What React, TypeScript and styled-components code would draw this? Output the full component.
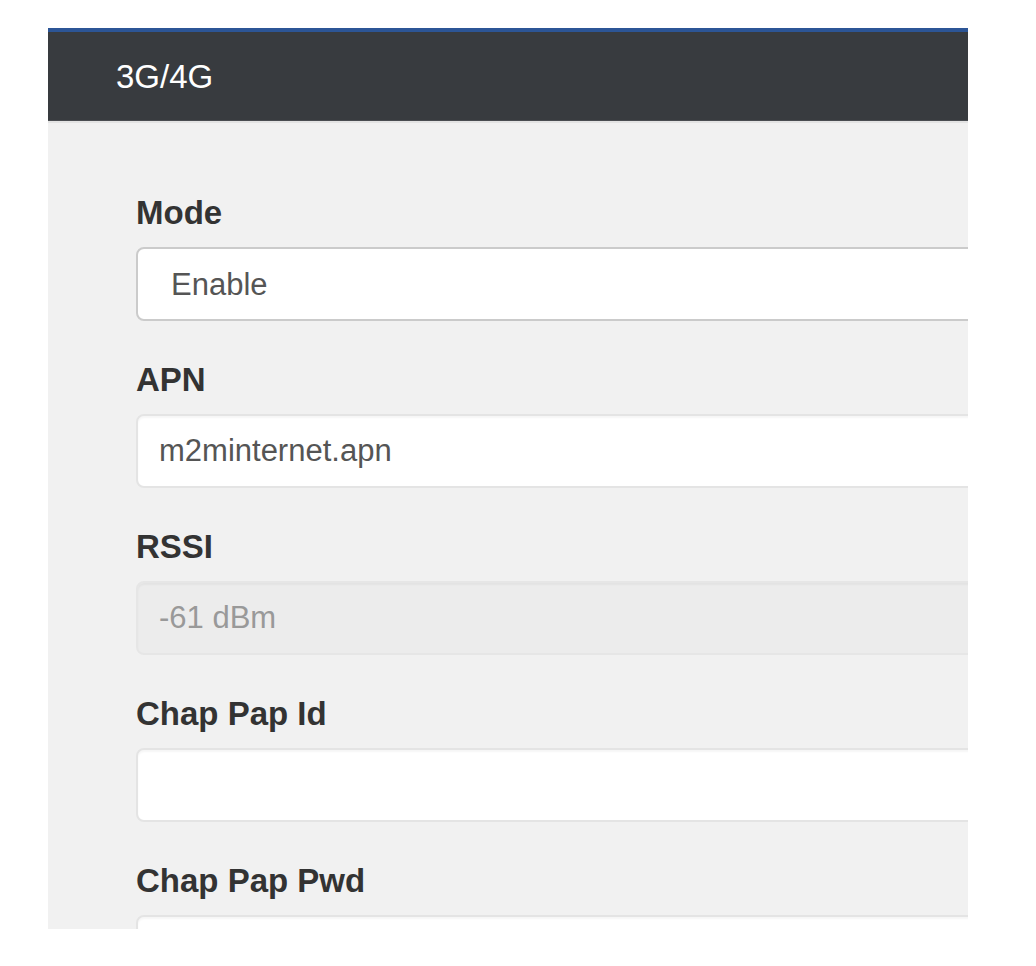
import React from 'react';
import styled, { createGlobalStyle } from 'styled-components';

const fields = [
  { label: 'APN', value: 'm2minternet.apn' },
  { label: 'RSSI', value: '-61 dBm', disabled: true },
  { label: 'Chap Pap Id', value: '' },
  { label: 'Chap Pap Pwd', value: '' },
];

export default function App() {
  return (
    <>
      <GlobalStyle />
      <Page>
        <Panel>
          <Header>3G/4G</Header>
          <Body>
            <Group>
              <Label>Mode</Label>
              <Select defaultValue="enable">
                <option value="enable">Enable</option>
                <option value="disable">Disable</option>
              </Select>
            </Group>
            {fields.map(({ label, value, disabled }) => (
              <Group key={label}>
                <Label>{label}</Label>
                <Input readOnly value={value} disabled={disabled} />
              </Group>
            ))}
          </Body>
        </Panel>
      </Page>
    </>
  );
}

const GlobalStyle = createGlobalStyle`
  body {
    margin: 0;
    background: #fff;
    font-family: "Liberation Sans", Arial, sans-serif;
  }
`;

const Page = styled.div`
  padding: 28px 0 0 48px;
`;

const Panel = styled.div`
  width: 920px;
  height: 901px;
  overflow: hidden;
  background: #f1f1f1;
`;

const Header = styled.div`
  height: 89px;
  border-top: 4px solid #2c5596;
  border-bottom: 2px solid #e3e3e3;
  background: #383b3f;
  box-shadow: inset 0 -1px 0 #4a4d51;
  padding-left: 68px;
  display: flex;
  align-items: center;
  color: #fff;
  font-size: 33px;
`;

const Body = styled.div`
  padding: 70px 0 0 88px;
`;

const Group = styled.div`
  margin-bottom: 39px;
`;

const Label = styled.label`
  display: block;
  margin-bottom: 14px;
  font-size: 33px;
  line-height: 40px;
  font-weight: bold;
  color: #333;
`;

const Input = styled.input`
  box-sizing: border-box;
  display: block;
  width: 880px;
  height: 74px;
  padding: 0 21px;
  border: 2px solid #e4e4e4;
  border-radius: 8px;
  background: #fff;
  box-shadow: inset 0 2px 2px rgba(0, 0, 0, 0.04);
  font-family: "Liberation Sans", Arial, sans-serif;
  font-size: 31px;
  color: #555;
  outline: none;

  &:disabled {
    background: #ececec;
    border-color: #e6e6e6;
    color: #999;
    -webkit-text-fill-color: #999;
    opacity: 1;
  }
`;

const Select = styled.select`
  box-sizing: border-box;
  display: block;
  width: 880px;
  height: 74px;
  padding: 0 33px;
  border: 2px solid #cbcbcb;
  border-radius: 8px;
  background: #fff;
  appearance: none;
  font-family: "Liberation Sans", Arial, sans-serif;
  font-size: 31px;
  color: #555;
  outline: none;
`;
